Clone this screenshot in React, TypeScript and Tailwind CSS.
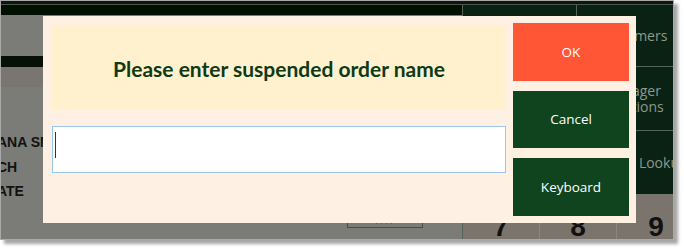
import React from 'react';

// Suspended order name prompt, shown over the POS register screen
const sideLabels = ['ANA SMITH', 'CH', 'ATE'];

function RegisterBackground() {
  return (
    <div className="flex flex-col w-full h-full">
      <div className="h-[4px] bg-[#101510] border-b border-[#4a584c] shrink-0" />
      <div className="flex flex-1 min-h-0">
        {/* left side: order list */}
        <div className="w-[461px] shrink-0 flex flex-col bg-[#7b7c78]">
          <div className="h-[10px] bg-[#021002]" />
          <div className="h-[41px]" />
          <div className="h-[11px] bg-[#061006]" />
          <div className="h-[20px] bg-[#797571]" />
          <div className="flex flex-col pt-[47px] gap-[7px] font-['Liberation_Sans',Arial,sans-serif] font-bold text-[14px] leading-[17.5px] text-[#111]">
            {sideLabels.map((l) => (
              <div key={l} className="ml-[-4px] whitespace-nowrap">
                {l}
              </div>
            ))}
          </div>
          <div className="flex-1" />
          <div className="ml-[346px] w-[76px] h-[22px] mb-[11px] border border-[#4b4b4b] flex items-end justify-center pb-[1px] text-[10px] leading-[10px] tracking-[2px] text-[#5b4a3a] font-['Liberation_Sans',Arial,sans-serif]">
            ....
          </div>
        </div>
        {/* right side: function buttons and keypad */}
        <div className="flex-1 min-w-0 flex flex-col border-l border-[#566358]">
          <div className="grid grid-cols-[114px_110px] grid-rows-[62px_64px_63px] bg-[#0a2213] font-['Open_Sans',sans-serif] text-[14px] leading-[16px] text-[#8c998f]">
            <div className="border-r border-b border-[#566358]" />
            <div className="border-b border-[#566358] flex items-center justify-center whitespace-nowrap">
              Customers
            </div>
            <div className="border-r border-b border-[#566358]" />
            <div className="border-b border-[#566358] flex flex-col items-center justify-center text-center">
              <span>Manager</span>
              <span>Functions</span>
            </div>
            <div className="border-r border-[#566358]" />
            <div className="flex items-center pl-[26px] whitespace-nowrap">Price Lookup</div>
          </div>
          <div className="grid grid-cols-[77px_77px_78px] h-[63px] bg-[#7b746c] font-['Liberation_Sans',Arial,sans-serif] font-bold text-[28px] leading-[32px] text-[#111]">
            <div className="border-r border-[#8a857f] flex justify-center pt-[17px]">7</div>
            <div className="border-r border-[#8a857f] flex justify-center pt-[17px]">8</div>
            <div className="flex justify-center pt-[17px]">9</div>
          </div>
        </div>
      </div>
    </div>
  );
}

function SuspendDialog() {
  return (
    <div className="absolute left-[42px] top-[15px] w-[593px] h-[207px] bg-[#fef1e4] flex pl-[9px] pr-[7px]">
      <div className="w-[454px] pt-[9px] flex flex-col">
        <div className="h-[85px] bg-[#fff1cd] flex items-center justify-center">
          <h2 className="font-['Lato',sans-serif] font-bold text-[21px] text-[#0e3a15] pt-[2px]">
            Please enter suspended order name
          </h2>
        </div>
        <div className="mt-[16px] h-[47px] bg-white border border-[#9cc6ee] pl-[2px] pt-[5px]">
          <div className="w-px h-[26px] bg-[#333]" />
        </div>
      </div>
      <div className="ml-[7px] w-[116px] pt-[7px] flex flex-col gap-[10px] font-['Open_Sans',sans-serif] text-[13.5px] text-white">
        <button className="h-[58px] bg-[#ff5635] flex items-center justify-center">OK</button>
        <button className="h-[57px] bg-[#10441f] flex items-center justify-center">Cancel</button>
        <button className="h-[58px] bg-[#10441f] flex items-center justify-center">Keyboard</button>
      </div>
    </div>
  );
}

export default function App() {
  return (
    <div className="w-[684px] h-[249px] bg-white">
      <div className="relative w-[674px] h-[240px] border border-[#a9a9a9] shadow-[4px_4px_3px_rgba(0,0,0,0.35)] overflow-hidden">
        <RegisterBackground />
        <SuspendDialog />
      </div>
    </div>
  );
}
